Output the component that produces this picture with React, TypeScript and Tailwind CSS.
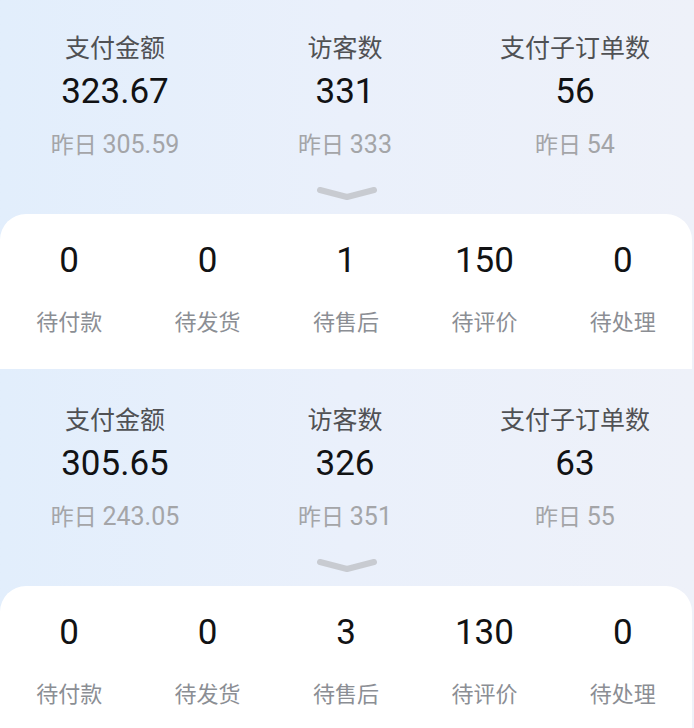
const blocks = [
  {
    stats: [
      { label: '支付金额', value: '323.67', prev: '305.59' },
      { label: '访客数', value: '331', prev: '333' },
      { label: '支付子订单数', value: '56', prev: '54' },
    ],
    orders: [
      { label: '待付款', value: '0' },
      { label: '待发货', value: '0' },
      { label: '待售后', value: '1' },
      { label: '待评价', value: '150' },
      { label: '待处理', value: '0' },
    ],
  },
  {
    stats: [
      { label: '支付金额', value: '305.65', prev: '243.05' },
      { label: '访客数', value: '326', prev: '351' },
      { label: '支付子订单数', value: '63', prev: '55' },
    ],
    orders: [
      { label: '待付款', value: '0' },
      { label: '待发货', value: '0' },
      { label: '待售后', value: '3' },
      { label: '待评价', value: '130' },
      { label: '待处理', value: '0' },
    ],
  },
];

type Block = (typeof blocks)[number];

function Chevron() {
  return (
    <svg width="64" height="16" viewBox="0 0 64 16" className="mt-[25px]">
      <path
        d="M5 5 L32 12 L59 5"
        fill="none"
        stroke="#c8cbd1"
        strokeWidth="6"
        strokeLinecap="round"
        strokeLinejoin="round"
      />
    </svg>
  );
}

function DataBlock({ block }: { block: Block }) {
  return (
    <div className="flex flex-col h-[372px] shrink-0 bg-linear-to-r from-[#e2eefc] via-[#eaf0fb] to-[#eef1f9]">
      <div className="flex flex-col items-center h-[214px] pt-[34px]">
        <div className="grid grid-cols-3 w-[690px] self-start">
          {block.stats.map((s) => (
            <div key={s.label} className="flex flex-col items-center">
              <span className="text-[25px] leading-[30px] text-[#505154]">{s.label}</span>
              <span className="mt-[8px] text-[35px] leading-[40px] text-[#111214]">{s.value}</span>
              <span className="mt-[19px] text-[23px] leading-[28px] text-[#a4a5a8]">
                昨日 <span className="text-[25px]">{s.prev}</span>
              </span>
            </div>
          ))}
        </div>
        <Chevron />
      </div>

      <div className="w-[692px] h-[155px] bg-white rounded-t-[26px] grid grid-cols-5 pt-[27px]">
        {block.orders.map((o) => (
          <div key={o.label} className="flex flex-col items-center">
            <span className="text-[35px] leading-[40px] text-[#111214]">{o.value}</span>
            <span className="mt-[28px] text-[22px] leading-[28px] text-[#8b8e94]">{o.label}</span>
          </div>
        ))}
      </div>
    </div>
  );
}

export default function App() {
  return (
    <div className="w-[694px] h-[728px] overflow-hidden flex flex-col bg-[#eaf0fb] font-['Roboto','Noto_Sans_CJK_SC',sans-serif]">
      {blocks.map((b, i) => (
        <DataBlock key={i} block={b} />
      ))}
    </div>
  );
}
